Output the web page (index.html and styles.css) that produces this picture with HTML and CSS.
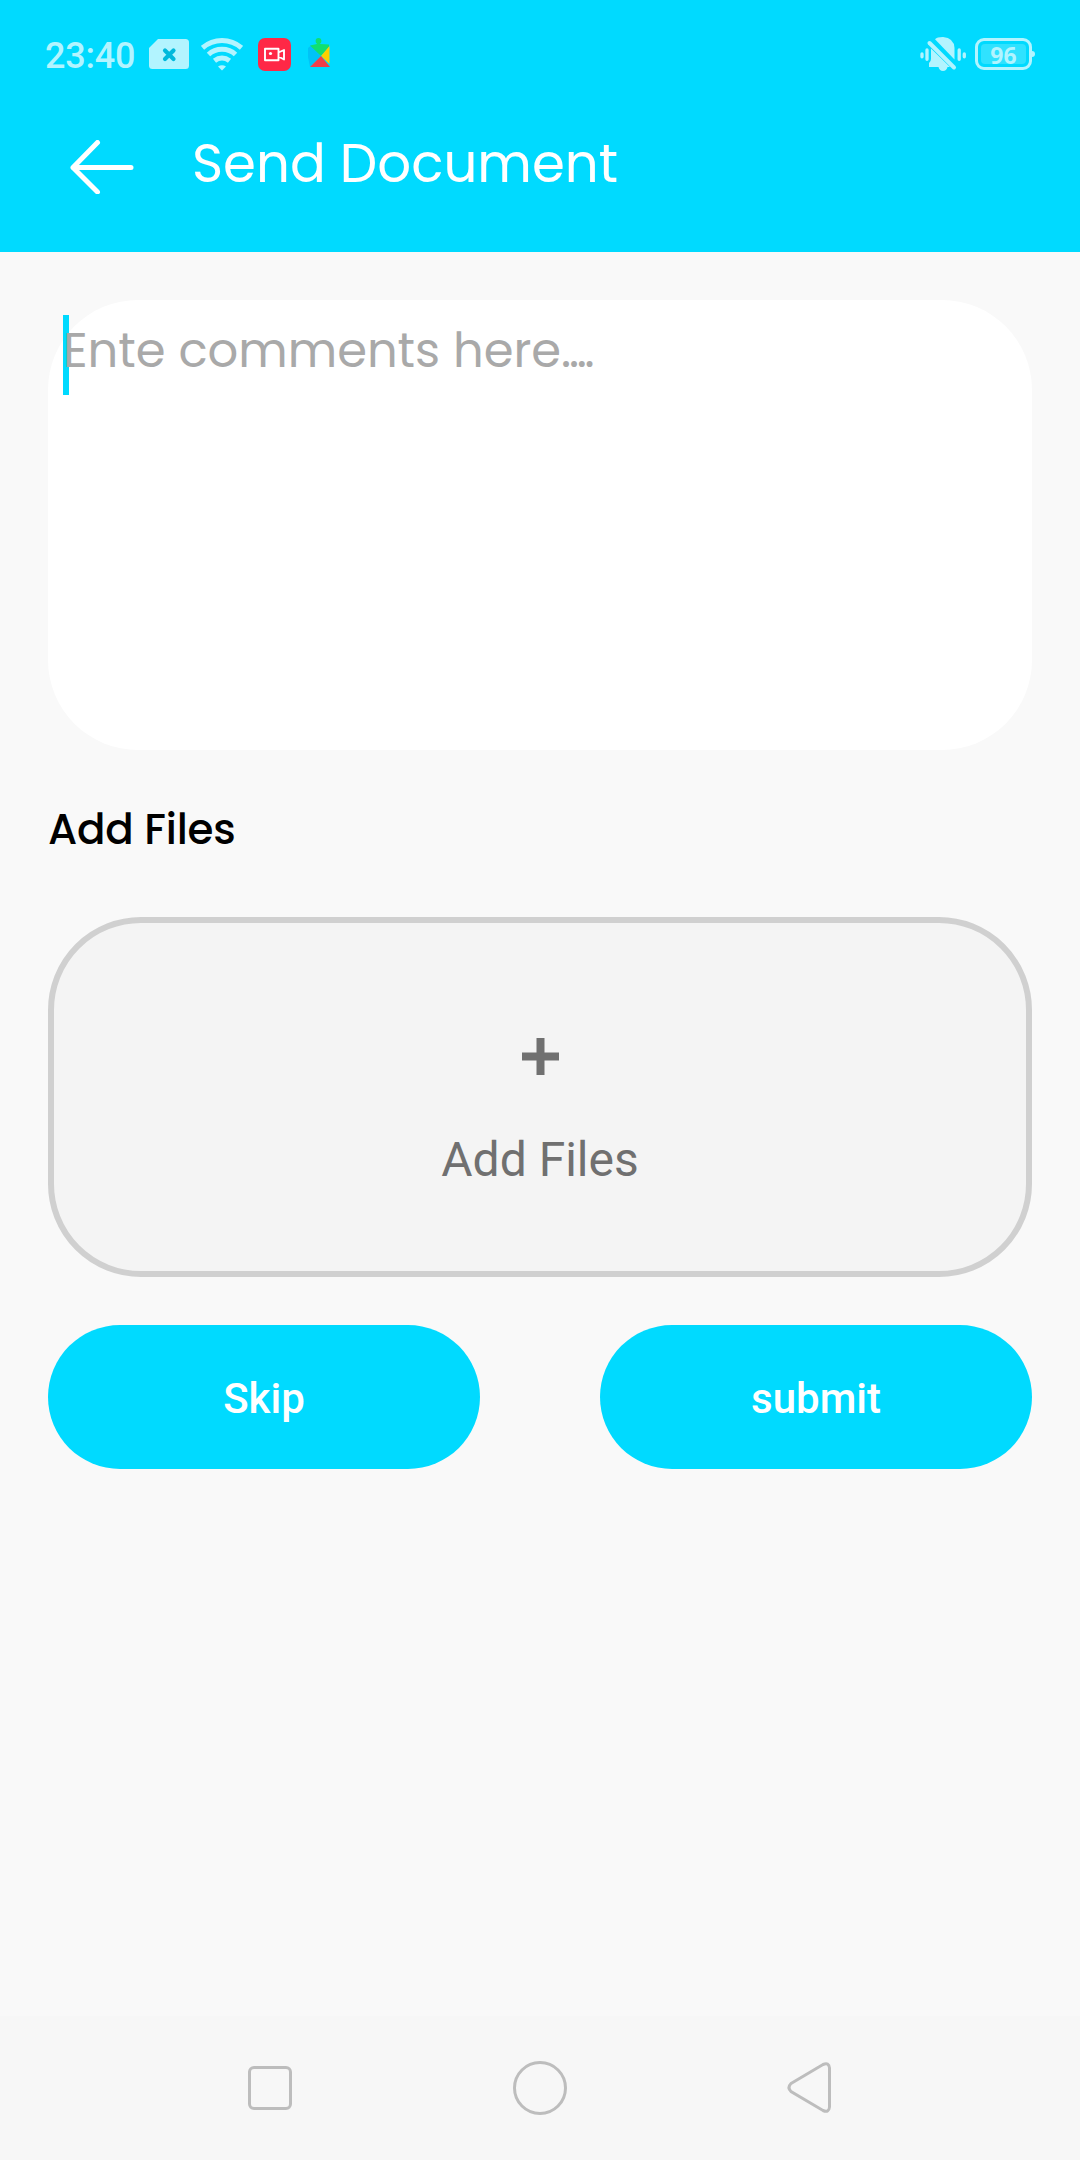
FILE: index.html
```html
<!DOCTYPE html>
<html lang="en">
<head>
<meta charset="utf-8">
<title>Send Document</title>
<link rel="stylesheet" href="styles.css">
</head>
<body>
<div class="screen">
  <header class="header">
    <div class="status">
      <div class="status-left">
        <span class="clock">23:40</span>
        <svg class="sim" width="40" height="30" viewBox="0 0 40 30"><path d="M9 0H36.500Q40 0 40 3.500V26.500Q40 30 36.500 30H3.500Q0 30 0 26.500V9Z" fill="#b2f4ff"/><path d="M16 11.500l8.500 8.500M24.500 11.500L16 20" stroke="#00b9dc" stroke-width="4.200" stroke-linecap="round"/></svg>
        <svg class="wifi" width="42" height="33" viewBox="0 0 42 33" fill="none" stroke="#b2f4ff" stroke-width="5"><path d="M1.500 9.800Q10 2.500 21 2.500T40.500 9.800"/><path d="M7.500 16.500Q13 11.300 21 11.300T34.500 16.500"/><path d="M13.500 22.800Q17 20 21 20T28.500 22.800"/><path d="M17 28.500Q21 25.800 25 28.500L21 32.500Z" fill="#b2f4ff" stroke="none"/></svg>
        <svg class="rec" width="33" height="33" viewBox="0 0 33 33"><rect width="33" height="33" rx="7" fill="#ff2846"/><path d="M7 10.700H20.500V22.300H7ZM20.500 14.500L26 12V21.500L20.500 18.500" fill="none" stroke="#fff" stroke-width="1.900" stroke-linejoin="round"/><circle cx="12.500" cy="15.500" r="1.600" fill="#fff"/></svg>
        <svg class="play" width="24" height="30" viewBox="0 0 24 30"><path d="M1 10L4 7.500 14 18 3 29 1 19Z" fill="#00c3f7"/><circle cx="11.500" cy="3" r="2.900" fill="#10df70"/><path d="M3 7.500L10 6V4H13V6L22 6.500V9L14 18Z" fill="#10df70"/><path d="M22.500 8V26L14 18Z" fill="#ffcf00"/><path d="M14 18L23 29H3Z" fill="#f13e48"/></svg>
      </div>
      <div class="status-right">
        <svg width="46" height="35" viewBox="0 0 46 35"><g fill="#b2f4ff"><path d="M15 2.200Q17 0 23 0Q34 1 34.500 11V22.500Z"/><path d="M11 11.500V22Q11 24.500 9 26V30H18.500Q19.500 34 23 34T27.500 30H30Z"/></g><path d="M9.500 6L34 30.500" stroke="#b2f4ff" stroke-width="4" stroke-linecap="round"/><path d="M2 17v2.800M7 13v9.300M39.200 13v9.300M44.300 17v2.800" stroke="#b2f4ff" stroke-width="3.300" stroke-linecap="round"/></svg>
        <div class="battery"><span class="battery-level">96</span></div>
      </div>
    </div>
    <div class="toolbar">
      <svg class="back" width="64" height="54" viewBox="0 0 64 54" fill="none" stroke="#fff" stroke-width="5" stroke-linecap="round" stroke-linejoin="round"><path d="M27.500 2.500L3 27.500 27.500 52M3 27.500H61"/></svg>
      <h1 class="title">Send Document</h1>
    </div>
  </header>
  <main class="content">
    <div class="comments"><span class="caret"></span><span class="placeholder">Ente comments here<span class="dots">....</span></span></div>
    <h2 class="label">Add Files</h2>
    <div class="dropzone">
      <svg width="37" height="37" viewBox="0 0 37 37"><path d="M18.500 0V37M0 18.500H37" stroke="#707070" stroke-width="8"/></svg>
      <span class="dropzone-text">Add Files</span>
    </div>
    <div class="actions">
      <button class="button">Skip</button>
      <button class="button">submit</button>
    </div>
  </main>
  <nav class="navbar">
    <svg width="54" height="54" viewBox="0 0 54 54"><rect x="6.500" y="6.500" width="41" height="41" rx="4.500"/></svg>
    <svg width="54" height="54" viewBox="0 0 54 54"><circle cx="27" cy="27" r="25.500"/></svg>
    <svg width="54" height="54" viewBox="0 0 54 54"><path d="M8 22.500L40 3.500Q46 1 46.500 7V46Q46 52 40 49.500L8 30.500Q4 26.500 8 22.500Z"/></svg>
  </nav>
</div>
</body>
</html>
```

FILE: styles.css
```css
* { box-sizing: border-box; }
body { margin: 0; background: #f9f9f9; font-family: Roboto, sans-serif; }
svg { display: block; flex: none; }
.screen { width: 1080px; height: 2160px; display: flex; flex-direction: column; }

.header { height: 252px; background: #00daff; }
.status { height: 108px; padding: 0 45px; display: flex; justify-content: space-between; align-items: center; }
.status-left { display: flex; align-items: center; }
.status-right { display: flex; align-items: center; gap: 9px; }
.clock { width: 104px; font-size: 36px; line-height: 42px; font-weight: 500; color: #b2f4ff; padding-top: 3px; letter-spacing: -0.2px; }
.wifi { margin-left: 12px; }
.rec { margin-left: 15px; }
.play { margin: -2px 0 0 16px; }
.battery { position: relative; width: 57px; height: 32px; border: 3px solid #b2f4ff; border-radius: 9px; padding: 3px; margin-right: 3px; }
.battery::after { content: ""; position: absolute; right: -6px; top: 10px; width: 3px; height: 6px; border-radius: 0 3px 3px 0; background: #b2f4ff; }
.battery-level { display: block; height: 20px; line-height: 22px; text-align: center; border-radius: 4px; background: #30e2ff; color: #b2f4ff; font: 700 23px/22px "Noto Sans", sans-serif; }

.toolbar { display: flex; padding: 0 70px; }
.back { margin-top: 32px; }
.title { margin: 23px 0 0 58px; font: 400 53px/66px Poppins, Inter, sans-serif; color: #fff; white-space: nowrap; }

.content { flex: 1; padding: 48px 48px 0; }
.comments { position: relative; height: 450px; border-radius: 90px; background: #fff; padding: 21px 15px; }
.caret { position: absolute; left: 15px; top: 15px; width: 6px; height: 80px; background: #00daff; }
.placeholder { position: relative; display: block; font: 400 48px/60px Poppins, Inter, sans-serif; color: #a9a9a9; white-space: nowrap; }
.dots { letter-spacing: -2.3px; }
.label { margin: 50px 0 0; height: 117px; font: 500 42px/60px Poppins, Inter, sans-serif; letter-spacing: -0.2px; color: #000; }
.dropzone { height: 360px; border: 6px solid #d0d0d0; border-radius: 93px; background: #f4f4f4; display: flex; flex-direction: column; align-items: center; padding-top: 115px; }
.dropzone-text { margin-top: 57px; font-size: 48px; line-height: 56px; color: #707070; }
.actions { display: flex; justify-content: space-between; margin-top: 48px; }
.button { width: 432px; height: 144px; border: 0; border-radius: 72px; padding: 4px 0 0; background: #00daff; color: #fff; font: 500 42px/50px Roboto, sans-serif; }

.navbar { height: 144px; background: #f7f7f7; display: flex; justify-content: center; align-items: center; gap: 216px; }
.navbar svg { fill: none; stroke: #bdbdbd; stroke-width: 3; }
```
